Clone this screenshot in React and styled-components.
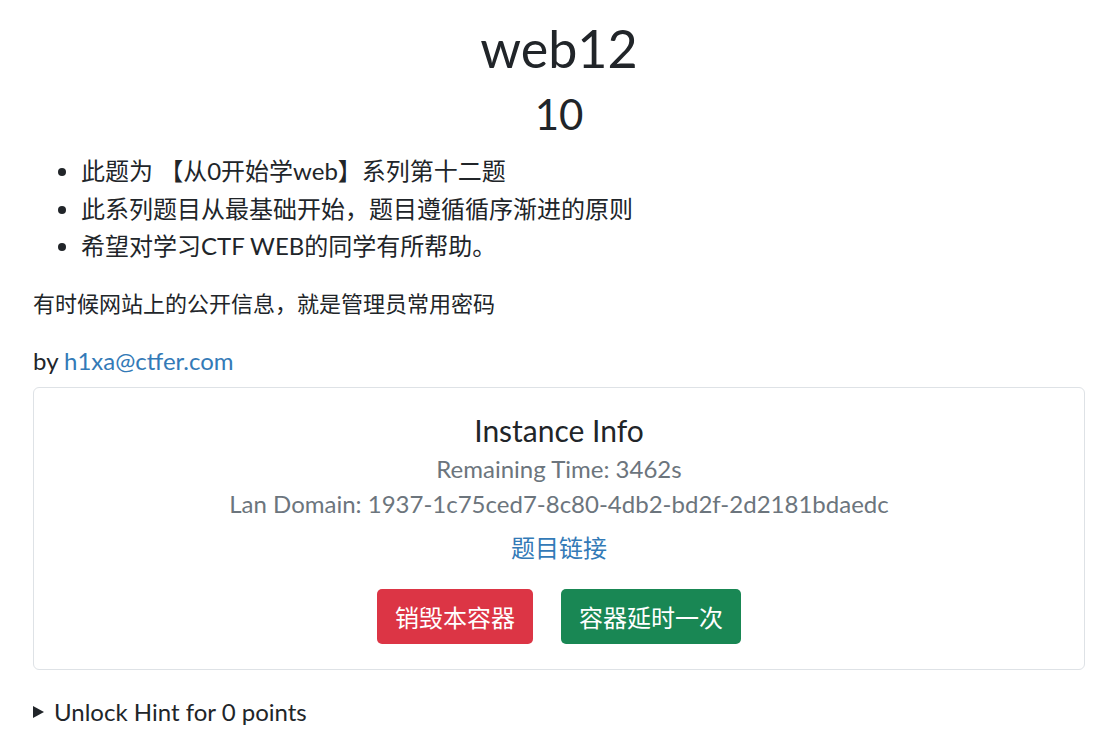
import styled, { createGlobalStyle } from 'styled-components';

const GlobalStyle = createGlobalStyle`
  body {
    margin: 0;
    background: #ffffff;
    color: #212529;
    font-family: Lato, "Noto Sans CJK SC", sans-serif;
  }
`;

const Page = styled.div`
  display: flex;
  flex-direction: column;
  padding: 0 31px 0 33px;
`;

const ChallengeName = styled.h2`
  margin: 17px 0 0;
  text-align: center;
  font-size: 52px;
  font-weight: 400;
  line-height: 62px;
`;

const ChallengeValue = styled.h3`
  margin: 11px 0 0;
  text-align: center;
  font-size: 42px;
  font-weight: 400;
  line-height: 48px;
`;

const Intro = styled.ul`
  margin: 14px 0 0;
  padding-left: 48px;
  font-size: 24px;
  line-height: 37.5px;
`;

const Note = styled.p`
  margin: 23px 0 0;
  font-family: "Liberation Serif", "Noto Sans CJK SC", serif;
  font-size: 22px;
  line-height: 33px;
`;

const Author = styled.p`
  margin: 22px 0 0;
  font-size: 24px;
  line-height: 36px;
`;

const Link = styled.a`
  color: #337ab7;
  text-decoration: none;
`;

const Card = styled.div`
  display: flex;
  flex-direction: column;
  align-items: center;
  margin-top: 8px;
  padding: 24px 20px 25px;
  border: 1px solid #dee2e6;
  border-radius: 6px;
`;

const CardTitle = styled.h5`
  margin: 0 0 3px;
  font-size: 30px;
  font-weight: 400;
  line-height: 36px;
`;

const Muted = styled.p`
  margin: 0;
  color: #6c757d;
  font-size: 24px;
  line-height: 35px;
`;

const CardLink = styled(Link)`
  margin-top: 9px;
  font-size: 24px;
  line-height: 36px;
`;

const Actions = styled.div`
  display: flex;
  gap: 28px;
  margin-top: 23px;
`;

const Button = styled.button`
  height: 55px;
  padding: 0 18px;
  border: none;
  border-radius: 5px;
  background: ${(p) => (p.$danger ? '#dc3545' : '#198754')};
  color: #ffffff;
  font-family: Lato, "Noto Sans CJK SC", sans-serif;
  font-size: 24px;
`;

const Hint = styled.details`
  margin-top: 24px;
  font-size: 24px;
  line-height: 36px;
`;

const HintLabel = styled.summary`
  display: flex;
  align-items: center;
  gap: 10px;
  list-style: none;
  cursor: pointer;

  &::-webkit-details-marker {
    display: none;
  }

  &::before {
    content: '';
    width: 0;
    height: 0;
    border-top: 6px solid transparent;
    border-bottom: 6px solid transparent;
    border-left: 11px solid #212529;
  }
`;

export default function App() {
  return (
    <>
      <GlobalStyle />
      <Page>
        <ChallengeName>web12</ChallengeName>
        <ChallengeValue>10</ChallengeValue>
        <Intro>
          <li>此题为 【从0开始学web】系列第十二题</li>
          <li>此系列题目从最基础开始，题目遵循循序渐进的原则</li>
          <li>希望对学习CTF WEB的同学有所帮助。</li>
        </Intro>
        <Note>有时候网站上的公开信息，就是管理员常用密码</Note>
        <Author>
          by <Link href="#">h1xa@ctfer.com</Link>
        </Author>
        <Card>
          <CardTitle>Instance Info</CardTitle>
          <Muted>Remaining Time: 3462s</Muted>
          <Muted>Lan Domain: 1937-1c75ced7-8c80-4db2-bd2f-2d2181bdaedc</Muted>
          <CardLink href="#">题目链接</CardLink>
          <Actions>
            <Button $danger>销毁本容器</Button>
            <Button>容器延时一次</Button>
          </Actions>
        </Card>
        <Hint>
          <HintLabel>Unlock Hint for 0 points</HintLabel>
        </Hint>
      </Page>
    </>
  );
}
